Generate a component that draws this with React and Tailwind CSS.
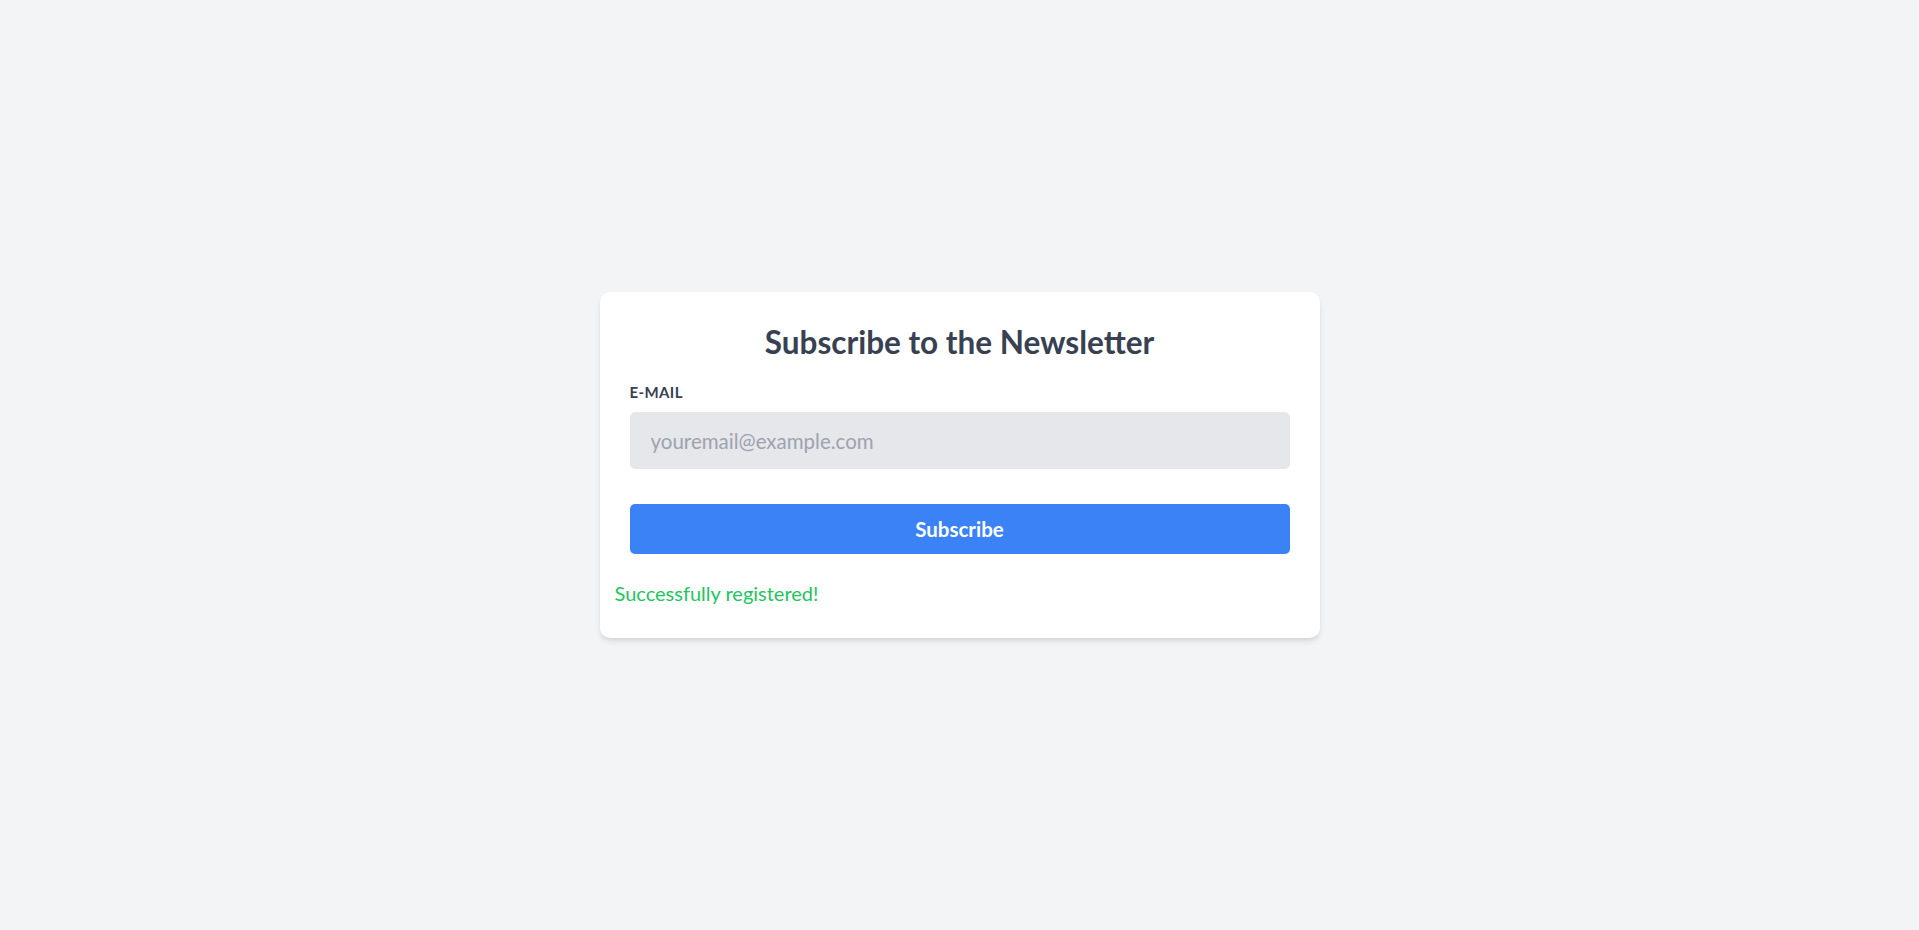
import { useState } from 'react'

const font = { fontFamily: "Lato, 'Liberation Sans', sans-serif" }

export default function App() {
  const [email, setEmail] = useState('')

  return (
    <div className="min-h-screen flex items-center justify-center bg-[#f3f4f6]" style={font}>
      <div className="w-[720px] bg-white rounded-[10px] shadow-md px-[15px] pt-[30px] pb-[30px]">
        <form className="px-[15px]" onSubmit={(e) => e.preventDefault()}>
          <h2 className="text-[31.5px] leading-[40px] font-bold text-center text-[#374151] mb-5">
            Subscribe to the Newsletter
          </h2>
          <label className="block text-[15px] leading-5 font-bold uppercase tracking-wide text-[#374151] mb-[10px]">
            E-mail
          </label>
          <input
            type="email"
            value={email}
            onChange={(e) => setEmail(e.target.value)}
            placeholder="youremail@example.com"
            className="block w-full h-[57px] px-5 bg-[#e5e7eb] border border-[#e5e7eb] rounded-[5px] text-[20.5px] leading-[25px] text-[#374151] placeholder:text-[#9ca3af] outline-none"
          />
          <button
            type="submit"
            className="mt-[35px] w-full h-[50px] bg-[#3b82f6] rounded-[5px] text-white font-bold text-[20.5px] leading-[30px]"
          >
            Subscribe
          </button>
        </form>
        <p className="mt-6 text-[20px] leading-[30px] text-[#22c55e]">Successfully registered!</p>
      </div>
    </div>
  )
}
